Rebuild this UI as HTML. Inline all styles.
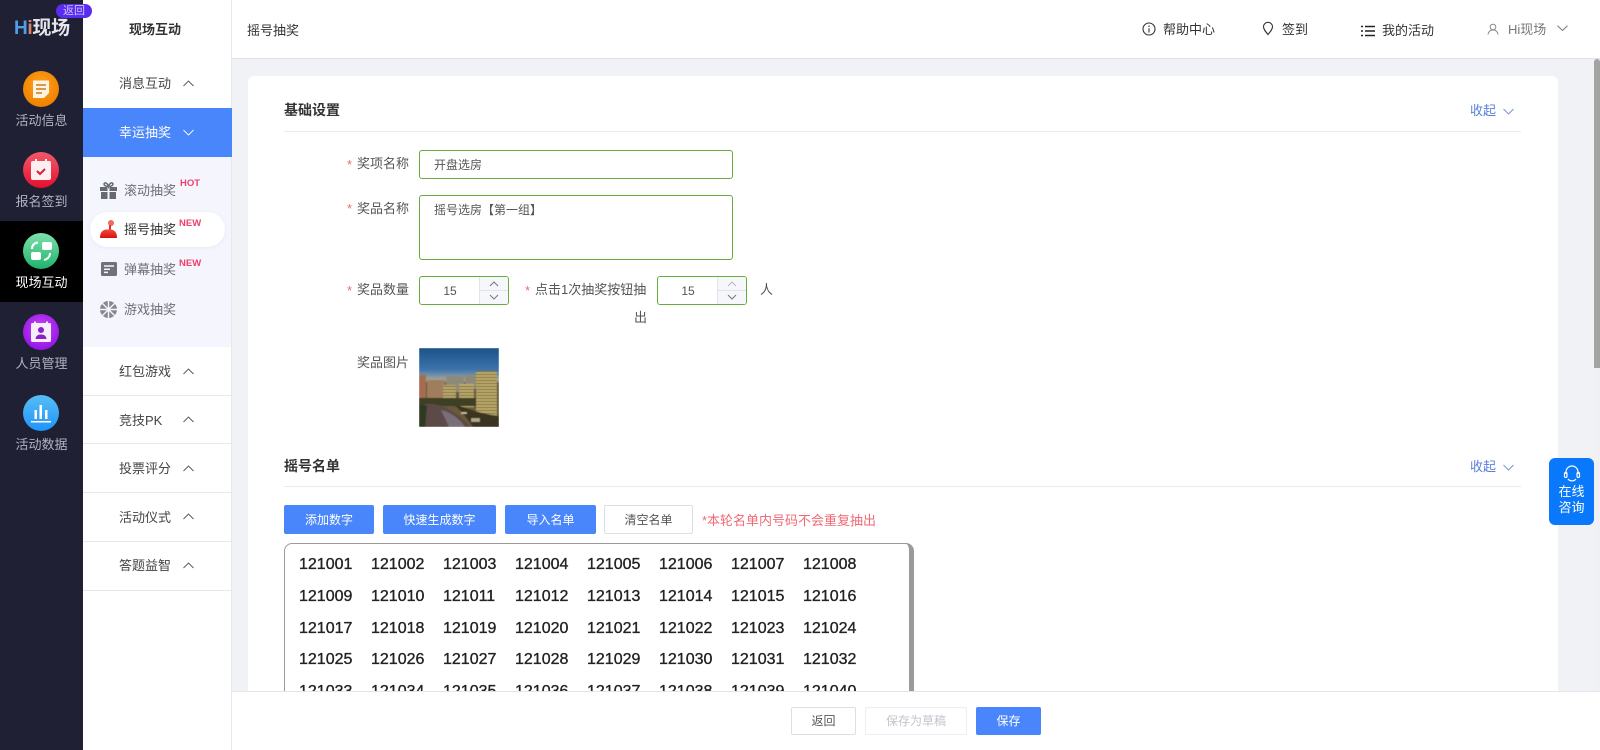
<!DOCTYPE html>
<html lang="zh-CN"><head><meta charset="utf-8"><title>摇号抽奖</title>
<style>
*{box-sizing:border-box}
html,body{margin:0;padding:0;width:1600px;height:750px;overflow:hidden;background:#f0f2f5;font-family:"Liberation Sans","Noto Sans CJK SC",sans-serif;font-size:13px;color:#333}
body{position:relative}
.a{position:absolute}
.t{position:absolute;line-height:20px;height:20px;white-space:nowrap}
.c{text-align:center}
.nav{position:absolute;left:0;width:83px;text-align:center;color:#b1b3c2;font-size:13px;line-height:20px}
.ic{position:absolute;left:23px;width:36px;height:36px;border-radius:50%}
.ic svg{display:block}
.mi{position:absolute;left:119px;line-height:20px;color:#444;white-space:nowrap}
.sub{position:absolute;left:124px;line-height:20px;color:#6c6f78;white-space:nowrap}
.hot{position:absolute;font:bold 9.5px/12px "Liberation Sans",sans-serif;color:#ef3f6b}
.hl{position:absolute;left:83px;width:148px;height:1px;background:#e6e8ee}
.lb{position:absolute;line-height:20px;color:#555;white-space:nowrap}
.st{position:absolute;color:#ef6c6c;line-height:20px}
.inp{position:absolute;border:1px solid #67ad3c;border-radius:3px;background:#fff}
.btn{position:absolute;top:505px;height:29px;line-height:28px;text-align:center;border-radius:2px;background:#4a86fb;color:#fff;font-size:12px;border:1px solid #4a86fb}
.num{position:absolute;left:299px;font-size:16px;line-height:20px;color:#222;white-space:nowrap;-webkit-text-stroke:.35px #222}
.num span{display:inline-block;width:72px}
.ch{position:absolute;left:183px}
</style></head><body>

<!-- main card -->
<div class="a" style="left:248px;top:76px;width:1310px;height:674px;background:#fff;border-radius:6px 6px 0 0"></div>

<!-- header -->
<div class="a" style="left:232px;top:0;width:1368px;height:59px;background:#fff;border-bottom:1px solid #dfe3e9"></div>
<div class="t" style="left:247px;top:21px;color:#333">摇号抽奖</div>
<svg class="a" style="left:1142px;top:22px" width="14" height="14" viewBox="0 0 14 14" fill="none" stroke="#333" stroke-width="1.1"><circle cx="7" cy="7" r="6"/><path d="M7 6.200V10.500M7 3.500V5"/></svg>
<div class="t" style="left:1163px;top:20px;color:#333">帮助中心</div>
<svg class="a" style="left:1262px;top:21px" width="12" height="15" viewBox="0 0 12 15" fill="none" stroke="#333" stroke-width="1.1"><path d="M6 13.500C3.500 10.500 1.500 8.200 1.500 5.800A4.500 4.500 0 0 1 10.500 5.800C10.500 8.200 8.500 10.500 6 13.500Z"/></svg>
<div class="t" style="left:1282px;top:20px;color:#333">签到</div>
<svg class="a" style="left:1361px;top:25px" width="14" height="12" viewBox="0 0 14 12" fill="none" stroke="#222" stroke-width="1.4"><path d="M0 1.500H2M4 1.500H14M0 6H2M4 6H14M0 10.500H2M4 10.500H14"/></svg>
<div class="t" style="left:1382px;top:21px;color:#333">我的活动</div>
<svg class="a" style="left:1487px;top:23px" width="12" height="12" viewBox="0 0 12 12" fill="none" stroke="#8a8a8a" stroke-width="1"><circle cx="6" cy="4" r="2.800"/><path d="M1 11.500C1.500 8.500 3.500 7 6 7C8.500 7 10.500 8.500 11 11.500"/></svg>
<div class="t" style="left:1508px;top:20px;color:#777">Hi现场</div>
<svg class="a" style="left:1557px;top:25px" width="11" height="7" viewBox="0 0 11 7" fill="none" stroke="#777"><path d="M.5 .8L5.500 5.500L10.500 .8"/></svg>

<!-- scrollbar -->
<div class="a" style="left:1594px;top:59px;width:6px;height:691px;background:#f1f1f3"></div>
<div class="a" style="left:1594px;top:59px;width:6px;height:309px;background:#a3a3a3;border-radius:3px 3px 0 0"></div>

<!-- left rail -->
<div class="a" style="left:0;top:0;width:83px;height:750px;background:#1f2033"></div>
<div class="a" style="left:0;top:221px;width:83px;height:81px;background:#000"></div>
<div class="a" style="left:56px;top:4px;width:36px;height:14px;border-radius:7px;background:#5a2cf0;color:#cfc6ff;font-size:11px;line-height:14px;text-align:center;z-index:3">返回</div>
<div class="t" style="left:14px;top:17px;font-size:19px;line-height:24px;height:24px;font-weight:bold;color:#e4e4ea;letter-spacing:-.3px"><span style="color:#4f9fe8;font-family:'Liberation Sans'">H</span><span style="color:#d9826a;font-family:'Liberation Sans'">i</span>现场</div>

<div class="ic" style="top:71px;background:radial-gradient(circle at 50% 40%,#ffa21f,#f08400 70%,#d96e00)"><svg width="36" height="36" viewBox="0 0 36 36"><path d="M10 9.500H26V22L21 27H10Z" fill="#fdf3e3"/><path d="M13 14H23M13 18H23M13 22H19" stroke="#d9984a" stroke-width="2"/></svg></div>
<div class="nav" style="top:111px">活动信息</div>
<div class="ic" style="top:152px;background:linear-gradient(#f2596a,#e5102f)"><svg width="36" height="36" viewBox="0 0 36 36"><rect x="8" y="9" width="20" height="19" rx="2" fill="#fdeef0"/><path d="M13 7V12M23 7V12" stroke="#fdeef0" stroke-width="2"/><path d="M14 19L17 22L22 17" fill="none" stroke="#d81e3c" stroke-width="2"/></svg></div>
<div class="nav" style="top:192px">报名签到</div>
<div class="ic" style="top:233px;background:linear-gradient(#7fe0ad,#1fb36c)"><svg width="36" height="36" viewBox="0 0 36 36" fill="#fff"><rect x="19" y="9" width="10" height="8" rx="2"/><rect x="8" y="19" width="10" height="8" rx="2"/><path d="M9 16C9 12 11 10 15 9.500M27 20C27 24 25 26 21 27" fill="none" stroke="#fff" stroke-width="2"/></svg></div>
<div class="nav" style="top:273px;color:#fff">现场互动</div>
<div class="ic" style="top:314px;background:radial-gradient(circle at 50% 40%,#c44bf0,#9b18e8 70%,#8a10d8)"><svg width="36" height="36" viewBox="0 0 36 36"><rect x="8" y="9" width="20" height="19" rx="1.500" fill="#f7eefc"/><path d="M12 7.500V11M24 7.500V11" stroke="#f7eefc" stroke-width="2"/><circle cx="18" cy="16" r="3" fill="#8d1fc4"/><path d="M12.500 25C13 21.500 15 20.500 18 20.500C21 20.500 23 21.500 23.500 25Z" fill="#8d1fc4"/></svg></div>
<div class="nav" style="top:354px">人员管理</div>
<div class="ic" style="top:395px;background:linear-gradient(#58bdf2,#1f95fb)"><svg width="36" height="36" viewBox="0 0 36 36" fill="#fff"><rect x="16.500" y="10" width="2.500" height="14"/><rect x="11.500" y="15" width="2.500" height="9"/><rect x="22" y="15" width="2.500" height="9"/><rect x="8" y="26" width="20" height="1.500"/></svg></div>
<div class="nav" style="top:435px">活动数据</div>

<!-- second panel -->
<div class="a" style="left:83px;top:0;width:149px;height:750px;background:#fff;border-right:1px solid #e6e8ee"></div>
<div class="t" style="left:129px;top:20px;font-weight:bold;color:#333">现场互动</div>
<div class="mi" style="top:74px">消息互动</div>
<svg class="ch" style="top:80px" width="11" height="7" viewBox="0 0 11 7" fill="none" stroke="#555" stroke-width=".9"><path d="M.5 6L5.500 1L10.500 6"/></svg>
<div class="a" style="left:83px;top:108px;width:149px;height:49px;background:#4a86fb"></div>
<div class="mi" style="top:123px;color:#fff">幸运抽奖</div>
<svg class="ch" style="top:129px" width="11" height="7" viewBox="0 0 11 7" fill="none" stroke="#fff" stroke-width=".9"><path d="M.5 1L5.500 6L10.500 1"/></svg>
<div class="a" style="left:83px;top:157px;width:148px;height:190px;background:#f5f6fd"></div>
<div class="a" style="left:90px;top:212px;width:135px;height:35px;border-radius:18px;background:#fff;box-shadow:0 1px 4px rgba(120,130,190,.12)"></div>

<svg class="a" style="left:100px;top:182px" width="17" height="17" viewBox="0 0 17 17" fill="#666a73"><path d="M0 5H7.500V9H0ZM9.500 5H17V9H9.500ZM1 10H7.500V17H1ZM9.500 10H16V17H9.500Z"/><path d="M8.500 4.500C6 4.500 3.500 3.500 4.200 1.500C5 0 7.500 1 8.500 4.500C9.500 1 12 0 12.800 1.500C13.500 3.500 11 4.500 8.500 4.500Z" fill="none" stroke="#666a73" stroke-width="1.500"/></svg>
<div class="sub" style="top:181px">滚动抽奖</div>
<div class="hot" style="left:180px;top:178px">HOT</div>

<svg class="a" style="left:100px;top:220px" width="17" height="18" viewBox="0 0 17 18"><defs><linearGradient id="rg" x1="0" y1="0" x2="0" y2="1"><stop offset="0" stop-color="#f24a3c"/><stop offset="1" stop-color="#d80f0f"/></linearGradient></defs><circle cx="11" cy="3" r="3" fill="#ec6a5e"/><path d="M10 5V10" stroke="#d33" stroke-width="2"/><path d="M0 18C0 13 2 10 6 9.500H11C15 10 17 13 17 18Z" fill="url(#rg)"/></svg>
<div class="sub" style="top:220px;color:#333">摇号抽奖</div>
<div class="hot" style="left:179px;top:218px">NEW</div>

<svg class="a" style="left:101px;top:262px" width="16" height="14" viewBox="0 0 16 14"><rect width="16" height="14" rx="1.500" fill="#6f7279"/><path d="M3 4H13M3 7.200H9M3 10.400H7" stroke="#f5f6fd" stroke-width="1.500"/></svg>
<div class="sub" style="top:260px">弹幕抽奖</div>
<div class="hot" style="left:179px;top:258px">NEW</div>

<svg class="a" style="left:100px;top:301px" width="17" height="17" viewBox="0 0 17 17"><circle cx="8.500" cy="8.500" r="8.500" fill="#85888f"/><g stroke="#f5f6fd" stroke-width="1.400"><path d="M8.500 0V17M0 8.500H17M2.500 2.500L14.500 14.500M14.500 2.500L2.500 14.500"/></g><circle cx="8.500" cy="8.500" r="2.200" fill="#f5f6fd"/></svg>
<div class="sub" style="top:300px">游戏抽奖</div>

<div class="mi" style="top:362px">红包游戏</div>
<svg class="ch" style="top:368px" width="11" height="7" viewBox="0 0 11 7" fill="none" stroke="#555" stroke-width=".9"><path d="M.5 6L5.500 1L10.500 6"/></svg>
<div class="hl" style="top:395px"></div>
<div class="mi" style="top:411px">竞技PK</div>
<svg class="ch" style="top:416px" width="11" height="7" viewBox="0 0 11 7" fill="none" stroke="#555" stroke-width=".9"><path d="M.5 6L5.500 1L10.500 6"/></svg>
<div class="hl" style="top:443px"></div>
<div class="mi" style="top:459px">投票评分</div>
<svg class="ch" style="top:465px" width="11" height="7" viewBox="0 0 11 7" fill="none" stroke="#555" stroke-width=".9"><path d="M.5 6L5.500 1L10.500 6"/></svg>
<div class="hl" style="top:492px"></div>
<div class="mi" style="top:508px">活动仪式</div>
<svg class="ch" style="top:513px" width="11" height="7" viewBox="0 0 11 7" fill="none" stroke="#555" stroke-width=".9"><path d="M.5 6L5.500 1L10.500 6"/></svg>
<div class="hl" style="top:541px"></div>
<div class="mi" style="top:556px">答题益智</div>
<svg class="ch" style="top:562px" width="11" height="7" viewBox="0 0 11 7" fill="none" stroke="#555" stroke-width=".9"><path d="M.5 6L5.500 1L10.500 6"/></svg>
<div class="hl" style="top:590px"></div>

<!-- section 1 -->
<div class="t" style="left:284px;top:100px;font-size:14px;font-weight:bold;color:#333">基础设置</div>
<div class="a" style="left:284px;top:131px;width:1237px;height:1px;background:#e8eaef"></div>
<div class="t" style="left:1470px;top:101px;color:#5a7fde">收起</div>
<svg class="a" style="left:1503px;top:108px" width="11" height="7" viewBox="0 0 11 7" fill="none" stroke="#7c93d8"><path d="M.5 1L5.500 6L10.500 1"/></svg>

<div class="st" style="left:347px;top:155px">*</div><div class="lb" style="left:357px;top:154px">奖项名称</div>
<div class="inp" style="left:419px;top:150px;width:314px;height:29px"></div>
<div class="t" style="left:434px;top:155px;font-size:12px;color:#555">开盘选房</div>

<div class="st" style="left:347px;top:199px">*</div><div class="lb" style="left:357px;top:199px">奖品名称</div>
<div class="inp" style="left:419px;top:195px;width:314px;height:65px"></div>
<div class="t" style="left:434px;top:200px;font-size:12px;color:#555">摇号选房【第一组】</div>

<div class="st" style="left:347px;top:281px">*</div><div class="lb" style="left:357px;top:280px">奖品数量</div>
<div class="inp" style="left:419px;top:276px;width:90px;height:29px"></div>
<div class="t c" style="left:420px;top:281px;width:60px;font-size:12px;color:#555">15</div>
<div class="a" style="left:479px;top:277px;width:29px;height:27px;background:#f5f7fa;border-left:1px solid #dfe3ea;border-radius:0 2px 2px 0"></div>
<div class="a" style="left:480px;top:290px;width:28px;height:1px;background:#dfe3ea"></div>
<svg class="a" style="left:489px;top:281px" width="10" height="6" viewBox="0 0 10 6" fill="none" stroke="#777"><path d="M1 5L5 1L9 5"/></svg>
<svg class="a" style="left:489px;top:294px" width="10" height="6" viewBox="0 0 10 6" fill="none" stroke="#777"><path d="M1 1L5 5L9 1"/></svg>

<div class="st" style="left:525px;top:281px">*</div><div class="lb" style="left:535px;top:280px">点击1次抽奖按钮抽</div>
<div class="lb" style="left:634px;top:308px">出</div>
<div class="inp" style="left:657px;top:276px;width:90px;height:29px"></div>
<div class="t c" style="left:658px;top:281px;width:60px;font-size:12px;color:#555">15</div>
<div class="a" style="left:717px;top:277px;width:29px;height:27px;background:#f5f7fa;border-left:1px solid #dfe3ea;border-radius:0 2px 2px 0"></div>
<div class="a" style="left:718px;top:290px;width:28px;height:1px;background:#dfe3ea"></div>
<svg class="a" style="left:727px;top:281px" width="10" height="6" viewBox="0 0 10 6" fill="none" stroke="#bbb"><path d="M1 5L5 1L9 5"/></svg>
<svg class="a" style="left:727px;top:294px" width="10" height="6" viewBox="0 0 10 6" fill="none" stroke="#777"><path d="M1 1L5 5L9 1"/></svg>
<div class="lb" style="left:760px;top:280px">人</div>

<div class="lb" style="left:357px;top:353px">奖品图片</div>
<div class="a" style="left:419px;top:348px;width:80px;height:79px;overflow:hidden">
<svg style="display:block;filter:blur(.5px)" width="80" height="79" viewBox="0 0 80 79">
<defs><linearGradient id="sky" x1="0" y1="0" x2="0" y2="1"><stop offset="0" stop-color="#1c5288"/><stop offset=".6" stop-color="#3c74ac"/><stop offset=".85" stop-color="#98a0a0"/><stop offset="1" stop-color="#c39d78"/></linearGradient>
<pattern id="win" width="3" height="3" patternUnits="userSpaceOnUse"><rect width="3" height="3" fill="#c2b070"/><rect y="2" width="3" height="1" fill="#7a6a3c"/></pattern></defs>
<rect width="80" height="36" fill="url(#sky)"/><rect y="34" width="80" height="45" fill="#6a5a3c"/>
<rect x="0" y="27" width="7" height="24" fill="#a56c50"/><rect x="8" y="32" width="18" height="22" fill="#a07d5c"/><rect x="27" y="28" width="18" height="16" fill="#8d8a7c"/><rect x="46" y="27" width="12" height="14" fill="#8e8a7a"/>
<rect x="24" y="37" width="13" height="20" fill="url(#win)"/><rect x="40" y="36" width="15" height="24" fill="url(#win)"/><rect x="57" y="23" width="21" height="45" fill="url(#win)"/>
<rect x="0" y="50" width="57" height="8" fill="#3e4026"/>
<path d="M6 56C22 54 38 64 52 79H4Z" fill="#5d4a48"/><path d="M0 56L8 58L6 79H0Z" fill="#2e3a22"/><path d="M22 62C32 64 42 72 46 79H30Z" fill="#7a6f78"/>
<path d="M34 56C48 60 60 66 80 68V79H54C48 70 42 62 34 56Z" fill="#3a3420"/><rect x="52" y="70" width="9" height="4" fill="#b3a68e"/><rect x="42" y="64" width="6" height="2" fill="#ccc0a8"/>
</svg></div>

<!-- section 2 -->
<div class="t" style="left:284px;top:456px;font-size:14px;font-weight:bold;color:#333">摇号名单</div>
<div class="a" style="left:284px;top:486px;width:1237px;height:1px;background:#e8eaef"></div>
<div class="t" style="left:1470px;top:457px;color:#5a7fde">收起</div>
<svg class="a" style="left:1503px;top:464px" width="11" height="7" viewBox="0 0 11 7" fill="none" stroke="#7c93d8"><path d="M.5 1L5.500 6L10.500 1"/></svg>

<div class="btn" style="left:284px;width:90px">添加数字</div>
<div class="btn" style="left:383px;width:113px">快速生成数字</div>
<div class="btn" style="left:505px;width:91px">导入名单</div>
<div class="btn" style="left:604px;width:89px;background:#fff;color:#555;border-color:#dcdfe6">清空名单</div>
<div class="t" style="left:702px;top:511px;color:#ee6a74">*本轮名单内号码不会重复抽出</div>

<div class="a" style="left:284px;top:543px;width:630px;height:170px;border:1px solid #9a9a9a;border-right:5px solid #9a9a9a;border-radius:8px;background:#fff"></div>
<div class="num" style="top:555px"><span>121001</span><span>121002</span><span>121003</span><span>121004</span><span>121005</span><span>121006</span><span>121007</span><span>121008</span></div>
<div class="num" style="top:587px"><span>121009</span><span>121010</span><span>121011</span><span>121012</span><span>121013</span><span>121014</span><span>121015</span><span>121016</span></div>
<div class="num" style="top:619px"><span>121017</span><span>121018</span><span>121019</span><span>121020</span><span>121021</span><span>121022</span><span>121023</span><span>121024</span></div>
<div class="num" style="top:650px"><span>121025</span><span>121026</span><span>121027</span><span>121028</span><span>121029</span><span>121030</span><span>121031</span><span>121032</span></div>
<div class="num" style="top:682px"><span>121033</span><span>121034</span><span>121035</span><span>121036</span><span>121037</span><span>121038</span><span>121039</span><span>121040</span></div>

<!-- consult -->
<div class="a" style="left:1549px;top:458px;width:45px;height:67px;background:#0a78fb;border-radius:6px;color:#fff;text-align:center;font-size:13px;line-height:16px;padding-top:26px">在线<br>咨询</div>
<svg class="a" style="left:1563px;top:465px" width="18" height="18" viewBox="0 0 18 18" fill="none" stroke="#fff" stroke-width="1.200"><path d="M3 9V7A6 6 0 0 1 15 7V9"/><rect x="1.500" y="7.500" width="2.500" height="5" rx="1.200"/><rect x="14" y="7.500" width="2.500" height="5" rx="1.200"/><path d="M5 14C7 16.500 11 16.500 13 14"/></svg>

<!-- footer -->
<div class="a" style="left:232px;top:691px;width:1368px;height:59px;background:#fff;border-top:1px solid #e2e5ea"></div>
<div class="a c" style="left:791px;top:707px;width:65px;height:28px;border:1px solid #dcdfe6;border-radius:2px;line-height:26px;font-size:12px;color:#555">返回</div>
<div class="a c" style="left:865px;top:707px;width:102px;height:28px;border:1px solid #eceef2;border-radius:2px;line-height:26px;font-size:12px;color:#c0c4cc">保存为草稿</div>
<div class="a c" style="left:976px;top:707px;width:65px;height:28px;background:#4a86fb;border-radius:2px;line-height:28px;font-size:12px;color:#fff">保存</div>
</body></html>
